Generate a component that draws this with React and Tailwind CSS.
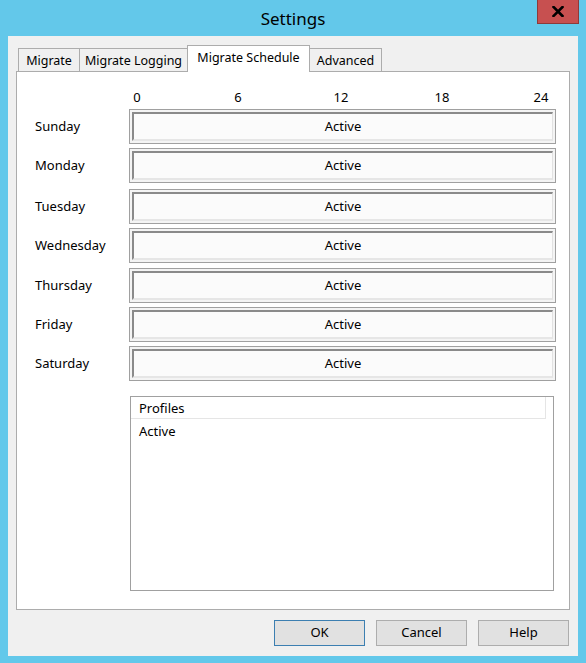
import React from 'react';

const days = [
  { name: 'Sunday', gap: 'mt-[3px]' },
  { name: 'Monday', gap: 'mt-[4px]' },
  { name: 'Tuesday', gap: 'mt-[6px]' },
  { name: 'Wednesday', gap: 'mt-[4px]' },
  { name: 'Thursday', gap: 'mt-[5px]' },
  { name: 'Friday', gap: 'mt-[4px]' },
  { name: 'Saturday', gap: 'mt-[4px]' },
];

const ticks = [
  { label: '0', left: 'left-[120px]' },
  { label: '6', left: 'left-[221px]' },
  { label: '12', left: 'left-[324px]' },
  { label: '18', left: 'left-[425px]' },
  { label: '24', left: 'left-[524px]' },
];

const tabs = [
  { label: 'Migrate', w: 'w-[62px]' },
  { label: 'Migrate Logging', w: 'w-[109px]' },
  { label: 'Migrate Schedule', w: 'w-[123px]', active: true },
  { label: 'Advanced', w: 'w-[73px]' },
];

const DayBar = ({ name, gap }) => (
  <div className={`flex items-center ${gap}`}>
    <div className="w-[112px] pl-[18px] text-[13px] text-black pt-[1px]">{name}</div>
    <div className="w-[427px] h-[35px] border border-[#a0a0a0] bg-[#f4f4f4] p-[2px]">
      <div className="h-full border-t-2 border-l-2 border-r border-b-2 border-t-[#8a8a8a] border-l-[#8a8a8a] border-r-[#e2e2e2] border-b-[#e6e6e6] bg-[#fbfbfb] flex items-center justify-center text-[13px] text-black">
        Active
      </div>
    </div>
  </div>
);

export default function App() {
  return (
    <div className="w-[586px] h-[663px] bg-[#63c8ea] flex flex-col font-['Noto_Sans',sans-serif] select-none">
      {/* title bar */}
      <div className="relative h-[36px] flex items-center justify-center">
        <span className="text-[17px] text-black mt-[1px]">Settings</span>
        <div className="absolute top-0 right-[7px] w-[42px] h-[24px] bg-[#c75050] border border-t-0 border-[#8d3a3a] flex items-center justify-center">
          <svg width="12" height="11" viewBox="0 0 12 11">
            <path d="M1.5 1 L10.5 10 M10.5 1 L1.5 10" stroke="#000" strokeWidth="2.6" strokeLinecap="square" />
          </svg>
        </div>
      </div>

      {/* client area */}
      <div className="mx-[8px] h-[620px] bg-[#f0f0f0] px-[8px] flex flex-col">
        {/* tabs */}
        <div className="mt-[9px] h-[26px] flex items-end pl-[2px]">
          {tabs.map((t, i) =>
            t.active ? (
              <div
                key={t.label}
                className={`${t.w} ${i > 0 ? '-ml-px' : ''} relative z-10 h-[27px] -mb-px bg-white border border-b-0 border-[#acacac] flex items-center justify-center text-[12.5px] text-black pb-[1px]`}
              >
                {t.label}
              </div>
            ) : (
              <div
                key={t.label}
                className={`${t.w} ${i > 0 ? '-ml-px' : ''} h-[23px] bg-[#f0f0f0] border border-b-0 border-[#acacac] flex items-center justify-center text-[12.5px] text-black pt-[2px]`}
              >
                {t.label}
              </div>
            )
          )}
        </div>

        {/* panel */}
        <div className="h-[539px] bg-white border border-[#acacac] flex flex-col">
          <div className="relative mt-[16px] h-[18px] text-[13px] text-black">
            {ticks.map((t) => (
              <span key={t.label} className={`absolute top-0 ${t.left} -translate-x-1/2`}>
                {t.label}
              </span>
            ))}
          </div>

          {days.map((d) => (
            <DayBar key={d.name} name={d.name} gap={d.gap} />
          ))}

          {/* profiles list */}
          <div className="mt-[15px] ml-[113px] w-[424px] h-[195px] border border-[#a0a0a0] bg-white flex flex-col">
            <div className="w-[415px] h-[22px] border-b border-r border-[#e5e5e5] flex items-center pl-[8px] pt-[3px] text-[13px] text-black">
              Profiles
            </div>
            <div className="pl-[8px] mt-[3px] text-[13px] text-black">Active</div>
          </div>
        </div>

        {/* buttons */}
        <div className="mt-[10px] flex justify-end gap-[11px] pr-[1px]">
          <button className="w-[91px] h-[26px] bg-[#e1e1e1] border border-[#3c7fb1] text-[13px] text-black">
            OK
          </button>
          <button className="w-[91px] h-[26px] bg-[#e1e1e1] border border-[#adadad] text-[13px] text-black">
            Cancel
          </button>
          <button className="w-[91px] h-[26px] bg-[#e1e1e1] border border-[#adadad] text-[13px] text-black">
            Help
          </button>
        </div>
      </div>
    </div>
  );
}
